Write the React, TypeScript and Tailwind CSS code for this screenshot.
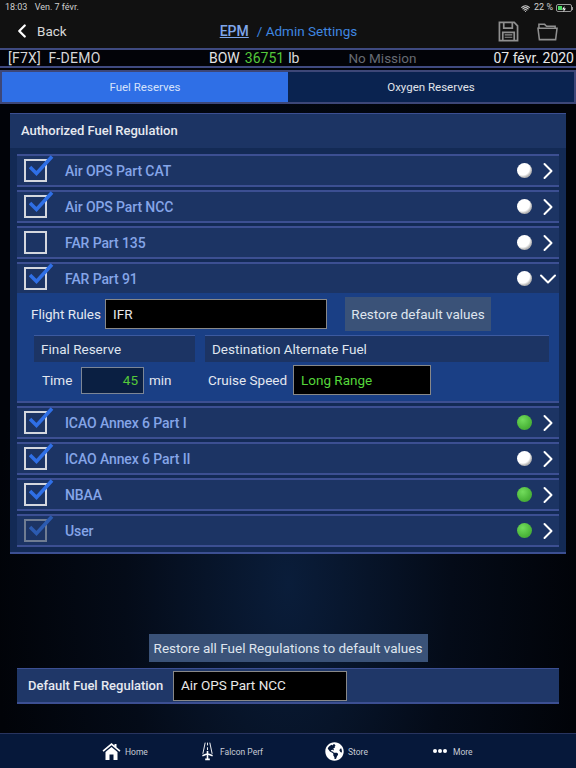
import React from "react";
import { ChevronLeft, ChevronRight, ChevronDown, Wifi } from "lucide-react";
import { FaGlobeAmericas } from "react-icons/fa";

interface Regulation {
  name: string;
  checked: boolean;
  dimmed?: boolean;
  green?: boolean;
  open?: boolean;
}

const regulationsTop: Regulation[] = [
  { name: "Air OPS Part CAT", checked: true },
  { name: "Air OPS Part NCC", checked: true },
  { name: "FAR Part 135", checked: false },
  { name: "FAR Part 91", checked: true, open: true },
];

const regulationsBottom: Regulation[] = [
  { name: "ICAO Annex 6 Part I", checked: true, green: true },
  { name: "ICAO Annex 6 Part II", checked: true },
  { name: "NBAA", checked: true, green: true },
  { name: "User", checked: true, green: true, dimmed: true },
];

const CheckBox = ({ checked, dimmed }: { checked: boolean; dimmed?: boolean }) => (
  <div className={`relative w-[23px] h-[23px] border-2 shrink-0 ${dimmed ? "border-[#6f7c92]" : "border-[#d4d7de]"}`}>
    {checked && (
      <svg className="absolute left-[3px] -top-[7px]" width="26" height="26" viewBox="0 0 26 26" fill="none">
        <path
          d="M1 13 L7.5 19.5 L23 2.5"
          stroke={dimmed ? "#2c5bb0" : "#2f6fe6"}
          strokeWidth="3.6"
        />
      </svg>
    )}
  </div>
);

const Row = ({ reg }: { reg: Regulation }) => (
  <div className="h-[33px] flex items-center bg-[#1c3464] border-t-2 border-b-2 border-[#3c4f92] pl-[7px] pr-[2px]">
    <CheckBox checked={reg.checked} dimmed={reg.dimmed} />
    <span className="ml-[18px] pt-[2px] text-[14px] tracking-[-0.1px] font-medium text-[#85a5e8] flex-1">{reg.name}</span>
    <div
      className={`w-[15px] h-[15px] rounded-full mr-[7px] ${
        reg.green
          ? "bg-[radial-gradient(circle_at_38%_32%,#72dc5c,#4cb63a_60%,#3f9a35)]"
          : "bg-[radial-gradient(circle_at_38%_35%,#ffffff_50%,#b4b4b4_68%)]"
      }`}
    />
    {reg.open ? (
      <ChevronDown size={28} strokeWidth={1.7} className="text-white -mx-[5px]" />
    ) : (
      <ChevronRight size={28} strokeWidth={1.7} className="text-white -mx-[5px]" />
    )}
  </div>
);

export default function App() {
  return (
    <div
      className="w-[576px] h-[768px] flex flex-col overflow-hidden text-white bg-[radial-gradient(ellipse_at_50%_76%,#0a1d3a_0%,#040b18_40%,#010308_72%)]"
      style={{ fontFamily: "Roboto, 'Noto Sans', sans-serif" }}
    >
      {/* Status bar + nav */}
      <div className="h-[48px] bg-[#111111] shrink-0">
        <div className="h-[14px] pt-[2px] flex items-center justify-between pl-[5px] pr-[3px] text-[9px] text-[#cfcfcf]">
          <div>
            18:03 <span className="ml-[5px]">Ven. 7 févr.</span>
          </div>
          <div className="flex items-center">
            <Wifi size={9} strokeWidth={3} />
            <span className="ml-[4px]">22 %</span>
            <div className="ml-[3px] w-[16px] h-[8px] border border-[#999] rounded-[2px] p-[1px] flex">
              <div className="w-[4px] bg-[#4cd964]" />
              <svg width="6" height="6" viewBox="0 0 6 6" className="-ml-[1px]">
                <path d="M3.5 0L1 3.4H2.8L2.3 6L5 2.6H3.2Z" fill="#ffffff" />
              </svg>
            </div>
            <div className="w-[1px] h-[3px] bg-[#999]" />
          </div>
        </div>
        <div className="h-[34px] flex items-center">
          <ChevronLeft size={22} strokeWidth={2.5} className="ml-[11px] text-white" />
          <span className="ml-[4px] text-[13.5px] text-[#d8d8d8]">Back</span>
          <div className="ml-[153px] text-[14px] flex items-center">
            <span className="underline font-medium text-[#7fa6ea]">EPM</span>
            <span className="ml-[8px] text-[13.5px] text-[#3f87e0]">/ Admin Settings</span>
          </div>
          <div className="flex items-center ml-auto mr-[18px] gap-[18px]">
            <svg width="21" height="21" viewBox="0 0 22 22" fill="none" stroke="#8f8f8f" strokeWidth="1.8">
              <path d="M2 1.5H17L20.5 5V20.5H1.5V1.5Z" />
              <path d="M6 2V7.5H15V2" />
              <path d="M5 20V12H17V20" />
              <path d="M7 14.5H15M7 17H15" strokeWidth="1.2" />
            </svg>
            <svg width="21" height="19" viewBox="0 0 22 19" fill="none" stroke="#8f8f8f" strokeWidth="1.6">
              <path d="M2 6V2H8L10 4H19V6" />
              <path d="M1 6H21L19.5 18H2.5L1 6Z" />
            </svg>
          </div>
        </div>
      </div>

      {/* Flight info */}
      <div className="h-[20px] shrink-0 flex items-center bg-[#020308] border-t-2 border-b-2 border-[#3f4a80] text-[14px] pl-[8px] pr-[2px]">
        <span className="text-[#d6d6d6] whitespace-pre w-[201px] tracking-[0.25px]">[F7X]  F-DEMO</span>
        <span className="text-[#e4e4e4]">BOW</span>
        <span className="ml-[5px] text-[#55c83a]">36751</span>
        <span className="ml-[4px] text-[#d8d8d8]">lb</span>
        <span className="ml-[49px] text-[13.5px] text-[#666a72]">No Mission</span>
        <span className="ml-auto text-[#e8e8e8]">07 févr. 2020</span>
      </div>

      {/* Tabs */}
      <div className="mt-[2px] h-[34px] shrink-0 flex border-2 border-[#3d4778] text-[11.5px]">
        <div className="w-[286px] pt-[1px] bg-[#2f6fe6] flex items-center justify-center text-[#d5e2fb]">Fuel Reserves</div>
        <div className="flex-1 pt-[1px] bg-[#0a2350] flex items-center justify-center text-[#e0e4ea]">Oxygen Reserves</div>
      </div>

      {/* Panel */}
      <div className="mt-[9px] mx-[10px] h-[441px] shrink-0 flex flex-col bg-[#132a55] border-t border-b-2 border-[#3c4f92]">
        <div className="h-[34px] bg-[#1c3464] flex items-center pl-[11px] text-[13px] font-medium text-[#e6e9f0] shrink-0">
          Authorized Fuel Regulation
        </div>
        <div className="mt-[6px] mx-[7px] flex flex-col gap-[3px]">
          {regulationsTop.map((r) => (
            <Row key={r.name} reg={r} />
          ))}
        </div>
        {/* Expanded FAR Part 91 */}
        <div className="mx-[7px] h-[110px] -mt-[2px] bg-[#1a3f85] border-b-2 border-[#3c4f92] shrink-0 flex flex-col">
          <div className="flex items-center h-[42px] pl-[14px] text-[13.5px]">
            <span className="text-[#e4e8f0] w-[74px]">Flight Rules</span>
            <div className="w-[222px] h-[30px] bg-black border border-[#888] flex items-center pl-[7px] text-[#e8e8e8]">IFR</div>
            <div className="ml-[18px] w-[146px] h-[34px] bg-[#3a5278] flex items-center justify-center text-[#dfe5ee]">Restore default values</div>
          </div>
          <div className="flex pl-[17px] gap-[10px] text-[13.5px] text-[#dfe5ee]">
            <div className="w-[161px] h-[27px] bg-[#1c3464] border-t border-[#3c5aa0] flex items-center pl-[7px]">Final Reserve</div>
            <div className="w-[344px] h-[27px] bg-[#1c3464] border-t border-[#3c5aa0] flex items-center pl-[7px]">Destination Alternate Fuel</div>
          </div>
          <div className="flex items-center mt-[3px] text-[13.5px] text-[#e4e8f0]">
            <span className="ml-[25px] w-[39px]">Time</span>
            <div className="w-[63px] h-[27px] bg-[#0a1f42] border border-[#7c8696] flex items-center justify-end pr-[5px] text-[#55c83a]">45</div>
            <span className="ml-[5px] w-[59px]">min</span>
            <span className="w-[85px]">Cruise Speed</span>
            <div className="w-[138px] h-[30px] bg-black border border-[#888] flex items-center pl-[7px] text-[#55d63a]">Long Range</div>
          </div>
        </div>
        <div className="mt-[3px] mx-[7px] flex flex-col gap-[3px]">
          {regulationsBottom.map((r) => (
            <Row key={r.name} reg={r} />
          ))}
        </div>
      </div>

      {/* Bottom actions */}
      <div className="mt-[80px] mx-auto w-[279px] h-[28px] shrink-0 bg-[#3a5278] flex items-center justify-center text-[13.5px] text-[#dfe5ee]">
        Restore all Fuel Regulations to default values
      </div>
      <div className="mt-[6px] mx-[17px] h-[36px] shrink-0 flex items-center bg-[#1f3768] border-t border-b-2 border-[#3c4f92] pl-[11px]">
        <span className="text-[13px] font-medium text-[#e6e9f0] w-[145px]">Default Fuel Regulation</span>
        <div className="w-[174px] h-[30px] bg-black border border-[#888] flex items-center pl-[7px] text-[13.5px] text-[#e8e8e8]">Air OPS Part NCC</div>
      </div>

      {/* Tab bar */}
      <div className="mt-auto h-[35px] shrink-0 flex items-center bg-[#06183a] border-t border-[#28345f] text-[8.5px] text-[#c6ccd6]">
        <svg className="ml-[102px] text-white" width="19" height="19" viewBox="0 0 19 19" fill="currentColor">
          <path d="M9.5 1L0.5 8.5L1.6 9.8L9.5 3.3L17.4 9.8L18.5 8.5L14.5 5.2V2H12.5V3.5Z" />
          <path d="M9.5 5L3.5 10V18H7.5V12.5H11.5V18H15.5V10Z" />
        </svg>
        <span className="ml-[4px] pt-[3px] w-[27px]">Home</span>
        <svg className="ml-[49px] text-white" width="13" height="20" viewBox="0 0 14 20" fill="none" stroke="currentColor" strokeWidth="1">
          <path d="M4.5 1L2 13M9.5 1L12 13M7 1V4M7 6V9" />
          <path d="M7 10V19M1.5 15L7 13L12.5 15M4.5 19H9.5" strokeWidth="1.7" />
        </svg>
        <span className="ml-[6px] pt-[3px] w-[46px]">Falcon Perf</span>
        <FaGlobeAmericas size={19} className="ml-[59px] text-white" />
        <span className="ml-[4px] pt-[3px] w-[20px]">Store</span>
        <div className="ml-[65px] flex gap-[1.5px]">
          <div className="w-[3.5px] h-[3.5px] rounded-full bg-white" />
          <div className="w-[3.5px] h-[3.5px] rounded-full bg-white" />
          <div className="w-[3.5px] h-[3.5px] rounded-full bg-white" />
        </div>
        <span className="ml-[6.5px] pt-[3px]">More</span>
      </div>
    </div>
  );
}
